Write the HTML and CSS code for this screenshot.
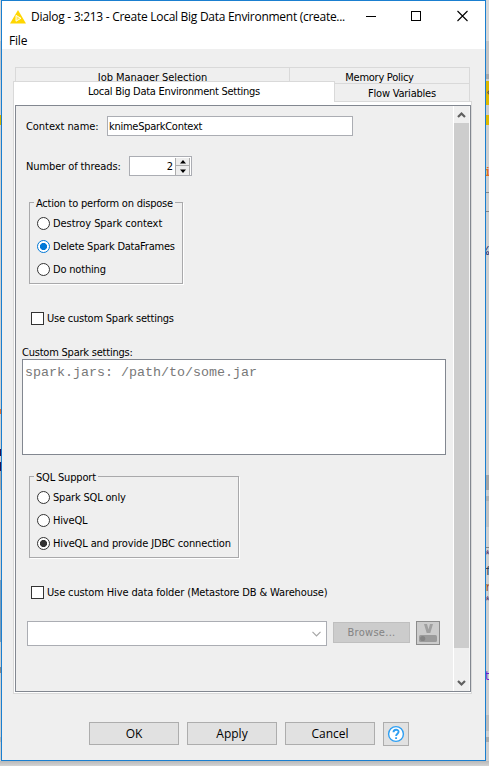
FILE: index.html
```html
<!DOCTYPE html>
<html lang="en">
<head>
<meta charset="utf-8">
<title>Dialog - 3:213 - Create Local Big Data Environment</title>
<link rel="stylesheet" href="styles.css">
</head>
<body>
<div class="desktop-left"></div>
<div class="desktop-right">
  <span class="bit b1">‹</span><span class="bit b2">i</span><span class="bit b3">%</span>
  <span class="bit b4">*</span><span class="bit b5">f</span><span class="bit b6">r</span><span class="bit b7">*</span><span class="bit b8">t</span>
</div>
<div class="window">
  <header class="titlebar">
    <svg class="logo" width="16" height="14" viewBox="0 0 16 14"><path d="M8 0L16 13.5H0Z" fill="#ffd600"/><path d="M6 5.4L11 8.3L6 11.2Z" fill="#ffe65c" stroke="#fff" stroke-width=".9"/></svg>
    <span class="title">Dialog - 3:213 - Create Local Big Data Environment (create...</span>
    <svg class="controls" width="103" height="12" viewBox="0 0 103 12" fill="none" stroke="#000"><path d="M0 6.5H10"/><rect x="45.5" y="1.5" width="9" height="9"/><path d="M91.5 1L101.5 11M101.5 1L91.5 11" stroke-width="1.1"/></svg>
  </header>
  <nav class="menubar"><span class="file">File</span></nav>
  <main class="body">
    <div class="tabs-back">
      <div class="tab job"><span class="t-job">Job Manager Selection</span></div>
      <div class="tab memory"><span class="t-mem">Memory Policy</span></div>
    </div>
    <div class="tabs-front">
      <div class="tab selected"><span class="t-local">Local Big Data Environment Settings</span></div>
      <div class="tab flow"><span class="t-flow">Flow Variables</span></div>
    </div>
    <section class="pane">
      <div class="viewport">
        <div class="form">
          <div class="row context"><label class="t-ctx">Context name:</label><div class="input"><span class="t-val">knimeSparkContext</span></div></div>
          <div class="row threads"><label class="t-thr">Number of threads:</label>
            <div class="spinner"><span>2</span><div class="steps">
              <i><svg width="6" height="4" viewBox="0 0 6 4"><path d="M3 0L6 3.5H0Z"/></svg></i>
              <i><svg width="6" height="4" viewBox="0 0 6 4"><path d="M3 4L6 .5H0Z"/></svg></i></div></div>
          </div>
          <div class="group dispose">
            <span class="legend t-act">Action to perform on dispose</span>
            <div class="radio"><i></i><span class="t-des">Destroy Spark context</span></div>
            <div class="radio blue"><i></i><span class="t-del">Delete Spark DataFrames</span></div>
            <div class="radio"><i></i><span class="t-not">Do nothing</span></div>
          </div>
          <div class="check spark"><i></i><span class="t-use">Use custom Spark settings</span></div>
          <div class="caption"><span class="t-cus">Custom Spark settings:</span></div>
          <div class="textarea">spark.jars: /path/to/some.jar</div>
          <div class="group sql">
            <span class="legend t-sql">SQL Support</span>
            <div class="radio"><i></i><span class="t-only">Spark SQL only</span></div>
            <div class="radio"><i></i><span class="t-hive">HiveQL</span></div>
            <div class="radio dark"><i></i><span class="t-jdbc">HiveQL and provide JDBC connection</span></div>
          </div>
          <div class="check hive"><i></i><span class="t-folder">Use custom Hive data folder (Metastore DB &amp; Warehouse)</span></div>
          <div class="browse-row">
            <div class="combo"><svg width="9" height="6" viewBox="0 0 9 6" fill="none" stroke="#a6a6a6" stroke-width="1.2"><path d="M.5.8L4.5 4.8L8.5.8"/></svg></div>
            <div class="browse"><span class="t-bro">Browse...</span></div>
            <div class="variable"><svg width="22" height="22" viewBox="0 0 22 22"><path d="M7 2H10L11.5 7.5L13 2H16L13.3 11H9.7Z" fill="#a0a0a0"/><rect x="2" y="13" width="18" height="7" rx="1.5" fill="#9b9b9b"/><circle cx="5.7" cy="16.5" r="2.6" fill="#858585"/></svg></div>
          </div>
        </div>
        <div class="scrollbar">
          <svg class="arrow" width="15" height="17" viewBox="0 0 15 17" fill="none" stroke="#606060" stroke-width="2.2"><path d="M4 11L7.5 7.5L11 11"/></svg>
          <div class="thumb"></div>
          <svg class="arrow down" width="15" height="17" viewBox="0 0 15 17" fill="none" stroke="#606060" stroke-width="2.2"><path d="M4 7L7.5 10.5L11 7"/></svg>
        </div>
      </div>
    </section>
  </main>
  <footer class="buttons">
    <div class="button"><span class="t-ok">OK</span></div>
    <div class="button"><span class="t-app">Apply</span></div>
    <div class="button"><span class="t-can">Cancel</span></div>
    <div class="button help"><svg width="18" height="18" viewBox="0 0 18 18" fill="none" stroke="#2f9ff2"><circle cx="9" cy="9" r="7.4" fill="#fff" stroke-width="1.4"/><path d="M6.5 7.2C6.5 3.9 11.6 4 11.6 6.8C11.6 8.6 9.1 8.8 9.1 11M9.1 12.2V14" stroke-width="1.9"/></svg></div>
  </footer>
</div>
</body>
</html>
```
FILE: styles.css
```css
* { box-sizing: border-box; }
html, body { margin: 0; height: 766px; overflow: hidden; }
body {
  display: flex;
  position: relative;
  background: linear-gradient(#e8e8e8 0 700px, #d6d6d6 761px, #b8b8b8 761px, #d4d4d4 766px);
  font: 11px/14px "DejaVu Sans Condensed", "DejaVu Sans", sans-serif;
  font-stretch: condensed;
  color: #000;
}
span, label { white-space: nowrap; }
i { display: block; flex: none; }

.desktop-left {
  width: 1px; flex: none; height: 761px;
  background: linear-gradient(#d8d8d8 0 41px, #bdc3cb 41px 80px, #ccd0d5 80px 115px, #d4b400 115px 125px, #cfcfcf 125px 409px, #e07030 409px 414px, #cfcfcf 414px 449px, #251050 449px 456px, #cfcfcf 456px 462px, #251050 462px 471px, #a8a8a8 471px 490px, #cfcfcf 490px 580px, #7c9cb8 580px 642px, #cfcfcf 642px 667px, #888 667px 673px, #cfcfcf 673px 737px, #b8b8b8 737px 742px, #cfcfcf 742px);
}
.desktop-right {
  position: absolute; left: 486px; top: 0; width: 3px; height: 761px; overflow: hidden;
  background: linear-gradient(#d8d8d8 0 41px, #c4c4c4 41px 74px, #a8a8a8 74px 79px, #cfcfcf 79px 81px, #dcb800 81px 105px, #ccc 105px 115px, #dcb800 115px 125px, #cfcfcf 125px 192px, #888 192px 193px, #cfcfcf 193px 211px, #888 211px 212px, #cfcfcf 212px 475px, #a5a5a5 475px 490px, #ccc 490px 496px, #b0b0b0 496px 501px, #c2c2c2 501px 527px, #d0d0d0 527px 547px, #888 547px 548px, #cfcfcf 548px 715px, #bcbcbc 715px 731px, #d0d0d0 731px 737px, #aaa 737px 742px, #cfcfcf 742px);
}
.bit { position: absolute; left: -1px; font: 12px/14px "Liberation Mono", monospace; }
.b1 { top: 86px; color: #555; }
.b2 { top: 166px; left: -2px; color: #e07020; font-weight: bold; }
.b3 { top: 245px; left: -4px; color: #102060; }
.b4 { top: 549px; left: -2px; color: #604070; }
.b5 { top: 565px; color: #345; }
.b6 { top: 581px; color: #a05020; }
.b7 { top: 595px; left: -2px; color: #604070; }
.b8 { top: 670px; left: -2px; color: #6a1fd0; }

.window {
  width: 485px; height: 761px; flex: none;
  display: flex; flex-direction: column;
  border: 1px solid #1a7fd0;
  background: #efefef;
}
.titlebar {
  height: 31px; flex: none; display: flex; align-items: center;
  padding-left: 8px; background: #fff;
  font: 12px/16px "Open Sans", "Noto Sans", sans-serif;
}
.logo { flex: none; }
.title { margin-left: 5px; width: 334px; letter-spacing: -.28px; }
.controls { flex: none; margin-left: 1px; margin-top: -2px; }
.menubar {
  height: 17px; flex: none; padding-left: 7px; background: #fff;
  font: 12px/17px "Open Sans", "Noto Sans", sans-serif;
  letter-spacing: -.2px;
}
.body { height: 645px; flex: none; padding: 18px 0 0 11px; }

.tabs-back { display: flex; height: 14px; margin-left: 2px; width: 455px; }
.tab { display: flex; flex: none; justify-content: center; border: 1px solid #d9d9d9; border-bottom: 0; }
.job { width: 275px; height: 16px; padding-top: 3px; }
.memory { width: 181px; height: 16px; margin-left: -1px; padding-top: 3px; }
.tabs-front { display: flex; position: relative; z-index: 1; height: 20px; width: 457px; }
.selected { width: 322px; height: 21px; background: #fff; padding-top: 3px; }
.flow { width: 135px; height: 18px; margin-top: 2px; border-left: 0; padding-top: 3px; background: #efefef; }

.pane { width: 459px; height: 593px; border: 1px solid #d9d9d9; background: #fff; padding: 3px 0 1px 1px; }
.viewport { display: flex; width: 456px; height: 587px; border: 1px solid #828790; background: #efefef; }
.form { width: 437px; flex: none; padding: 10px 0 0 6px; }
.row { display: flex; align-items: center; height: 20px; padding-left: 4px; }
.row label { padding-top: 2px; }
.context label { width: 81px; }
.input { width: 246px; height: 20px; border: 1px solid #abadb3; background: #fff; padding: 3px 0 0 1px; }
.threads { margin-top: 20px; }
.threads label { width: 103px; }
.spinner { display: flex; width: 63px; height: 20px; border: 1px solid #abadb3; background: #fff; padding-right: 1px; }
.spinner > span { flex: 1; text-align: right; padding: 3px 2px 0 0; }
.steps { width: 15px; display: flex; flex-direction: column; padding-top: 1px; }
.steps i { display: flex; align-items: center; justify-content: center; height: 8px; border: 1px solid #acacac; border-width: 0 1px 1px; background: #ededed; }
.steps i + i { height: 9px; border-bottom: 0; }

.group { position: relative; height: 82px; margin-left: 7px; border: 1px solid #a9a9ab; box-shadow: 1px 1px #fff; padding: 9px 0 0 7px; }
.dispose { width: 154px; margin-top: 26px; }
.sql { width: 210px; margin-top: 21px; }
.legend { position: absolute; left: 4px; top: -6px; padding: 0 2px; background: #efefef; }
.radio { display: flex; align-items: center; height: 23px; }
.radio i { width: 13px; height: 13px; border: 1px solid #333; border-radius: 50%; background: #fff; margin-right: 3px; }
.blue i { border-color: #0078d7; background: radial-gradient(circle, #0078d7 0 3.2px, #fff 3.9px); }
.dark i { background: radial-gradient(circle, #333 0 3.2px, #fff 3.9px); }
.check { display: flex; align-items: center; height: 13px; padding-left: 9px; }
.check i { width: 13px; height: 13px; border: 1px solid #333; background: #fff; margin-right: 3px; }
.spark { margin-top: 28px; }
.caption { height: 14px; margin-top: 20px; padding-top: 1px; }
.textarea { width: 424px; height: 96px; border: 1px solid #828790; background: #fff; padding: 5px 0 0 2px; font: 13.33px/16px "Liberation Mono", monospace; color: #787878; white-space: nowrap; }
.hive { margin-top: 28px; }
.browse-row { display: flex; margin: 22px 0 0 5px; }
.combo { width: 300px; height: 25px; display: flex; align-items: center; justify-content: flex-end; padding-right: 5px; border: 1px solid #abadb3; background: #fff; }
.browse { width: 77px; height: 21px; margin: 1px 6px 0; border: 1px solid #bfbfbf; background: #ccc; color: #838383; text-align: center; padding-top: 3px; }
.variable { width: 24px; height: 24px; border: 1px solid #8c8c8c; background: #ccc; }
.variable svg { display: block; }

/* tracking that fits each label to the dialog font's widths */
.t-job, .t-ctx, .t-des { letter-spacing: -.06px; }
.t-thr { letter-spacing: -.1px; }
.t-jdbc, .t-folder { letter-spacing: -.13px; }
.t-hive, .t-sql, .t-only, .t-not { letter-spacing: -.18px; }
.t-act, .t-del, .t-use, .t-cus, .t-flow { letter-spacing: -.22px; }
.t-val, .t-local, .t-mem { letter-spacing: -.27px; }
.t-bro { letter-spacing: .3px; }

.scrollbar { width: 17px; height: 585px; border-left: 1px solid #fff; border-right: 1px solid #f7f7f7; display: flex; flex-direction: column; }
.arrow { display: block; flex: none; }
.thumb { height: 525px; flex: none; background: #cdcdcd; }
.down { margin-top: 26px; }

.buttons { display: flex; gap: 8px; padding: 28px 0 0 87px; font: 12px/16px "Open Sans", "Noto Sans", sans-serif; }
.button { width: 90px; height: 23px; border: 1px solid #adadad; background: #e1e1e1; text-align: center; padding-top: 3px; }
.help { width: 26px; height: 24px; padding: 2px 0 0 3px; }
.help svg { display: block; }
```
